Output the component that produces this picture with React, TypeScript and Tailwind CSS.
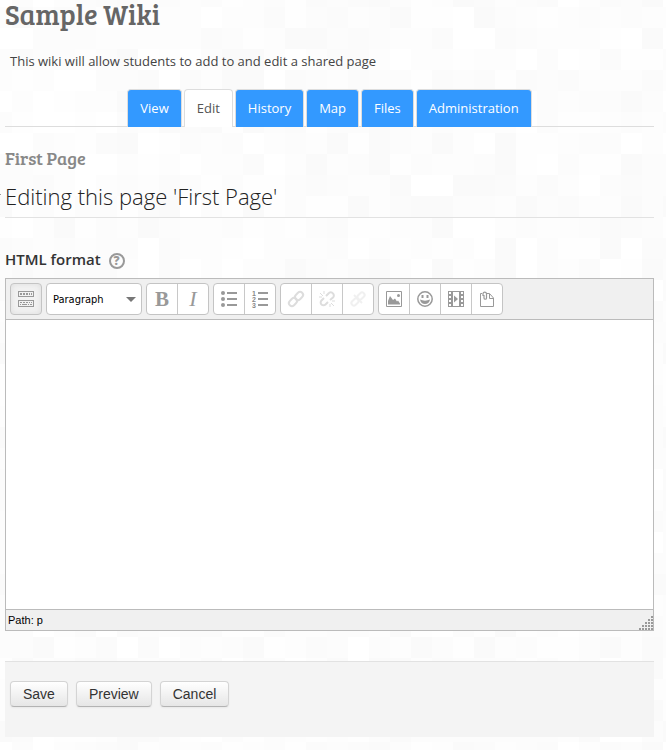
import type { ReactNode } from "react";

const slab = "font-['Bree_Serif','DejaVu_Serif_Condensed','DejaVu_Serif',serif]";

const TILE = 21;
const COLS = 32;
const ROWS = 36;
const shades = ["#ffffff", "#fdfdfd", "#fcfcfc", "#fbfbfb", "#fdfdfd", "#fafafa", "#fefefe", "#fcfcfc"];

function tileShade(col: number, row: number) {
  const n = Math.sin(col * 12.9898 + row * 78.233) * 43758.5453;
  return shades[Math.floor((n - Math.floor(n)) * shades.length)];
}

function Mosaic() {
  const tiles = [];
  for (let r = 0; r < ROWS; r++) {
    for (let c = 0; c < COLS; c++) {
      tiles.push(<rect key={`${r}-${c}`} x={c * TILE} y={r * TILE} width={TILE} height={TILE} fill={tileShade(c, r)} />);
    }
  }
  return (
    <svg aria-hidden="true" className="absolute inset-0 -z-10 h-full w-full">
      <defs>
        <pattern id="mosaic" x={-9} y={-14} width={COLS * TILE} height={ROWS * TILE} patternUnits="userSpaceOnUse">
          {tiles}
        </pattern>
      </defs>
      <rect width="100%" height="100%" fill="url(#mosaic)" />
    </svg>
  );
}

function Icon({ children, crisp }: { children: ReactNode; crisp?: boolean }) {
  return (
    <svg aria-hidden="true" width="16" height="16" viewBox="0 0 16 16" fill="none" stroke="none" className="overflow-visible" shapeRendering={crisp ? "crispEdges" : "auto"}>
      {children}
    </svg>
  );
}

const KeyboardIcon = () => (
  <Icon crisp>
    <path d="M.5 .5h15v5H.5zM.5 9.5h15v6H.5z" stroke="#999" />
    <path d="M2 2h2v2H2zM5 2h2v2H5zM8 2h2v2H8zM11 2h1v2h-1zM13 2h1v2h-1zM2 11h2v1H2zM5 11h2v1H5zM8 11h2v1H8zM11 11h1v1h-1zM13 11h1v1h-1zM2 13h1v1H2zM4 13h5v1H4zM10 13h1v1h-1zM12 13h2v1h-2z" fill="#999" />
  </Icon>
);

const BulletsIcon = () => (
  <Icon>
    <g fill="#999">
      <circle cx="2" cy="2" r="2" />
      <circle cx="2" cy="8" r="2" />
      <circle cx="2" cy="14" r="2" />
      <path d="M6 1h10v2H6zM6 7h10v2H6zM6 13h10v2H6z" />
    </g>
  </Icon>
);

const NumbersIcon = () => (
  <Icon>
    <g fill="#888">
      <path d="M6 1h10v2H6zM6 7h10v2H6zM6 13h10v2H6z" fill="#999" />
      <g className="font-['Liberation_Sans',sans-serif] text-[7px] font-bold">
        <text x="0" y="5">1</text>
        <text x="0" y="11">2</text>
        <text x="0" y="17">3</text>
      </g>
    </g>
  </Icon>
);

const LinkIcon = () => (
  <Icon>
    <g stroke="#ddd" strokeWidth="2">
      <rect x="6.5" y="2" width="9" height="6" rx="3" transform="rotate(-45 11 5)" />
      <rect x=".5" y="8" width="9" height="6" rx="3" transform="rotate(-45 5 11)" />
    </g>
  </Icon>
);

const UnlinkIcon = () => (
  <Icon>
    <g stroke="#ddd" strokeWidth="2">
      <path d="M7 5l2.500-2.500a2.800 2.800 0 0 1 4.500 0a2.800 2.800 0 0 1 0 4L11 9M5 7l-2.500 2.500a2.800 2.800 0 0 0 0 4a2.800 2.800 0 0 0 4 0L9 11" />
      <path d="M1 2l3 3M5 0v3M0 6h3M12 12l3 3M11 13v3M13 10h3" strokeWidth="1" />
    </g>
  </Icon>
);

const NoLinkIcon = () => (
  <Icon>
    <g stroke="#f0f0f0" strokeWidth="2">
      <rect x="7" y="2.5" width="8" height="5" rx="2.5" transform="rotate(-45 11 5)" />
      <rect x="1" y="8.5" width="8" height="5" rx="2.5" transform="rotate(-45 5 11)" />
      <path d="M4 4l8 8" />
    </g>
  </Icon>
);

const PictureIcon = () => (
  <Icon>
    <path d="M.5 .5h15v15H.5z" stroke="#999" />
    <path d="M2 13.500V10l2-5 3 4 2-1.500 2 3 1-1 2 3v1z" fill="#999" />
    <circle cx="12.500" cy="4.500" r="1.500" fill="#999" />
  </Icon>
);

const SmileyIcon = () => (
  <Icon>
    <circle cx="8" cy="8" r="7.200" stroke="#999" strokeWidth="1.500" />
    <path d="M4.500 4h2v3h-2zM9.500 4h2v3h-2zM3 8.500c3 1.500 7 1.500 10 0c-.5 3-2.500 4.500-5 4.500s-4.500-1.500-5-4.500z" fill="#999" />
  </Icon>
);

const FilmIcon = () => (
  <Icon>
    <path fillRule="evenodd" d="M0 0h16v16H0zM5 1v14h6V1zM1 1v2h2V1zM1 5v2h2V5zM1 9v2h2V9zM1 13v2h2v-2zM13 1v2h2V1zM13 5v2h2V5zM13 9v2h2V9zM13 13v2h2v-2z" fill="#999" />
    <path d="M6 4.500l4 3.500-4 3.500z" fill="#999" />
  </Icon>
);

const FilesIcon = () => (
  <Icon>
    <path d="M3 2.500H1.500v13h13V7L10.500 2.500H8M10.500 3v4.500h4" stroke="#999" />
    <path d="M4 5V2.500a1.800 1.800 0 0 1 3.500 0V7a1 1 0 0 1-2.500 0V4" stroke="#999" strokeWidth="1.200" />
  </Icon>
);

const Bold = () => <span className="font-['Liberation_Serif',serif] text-[21px] leading-none font-bold">B</span>;
const Italic = () => <span className="font-['Liberation_Serif',serif] text-[22px] leading-none italic">I</span>;

type Tool = { label: string; icon: ReactNode; disabled?: boolean };

function ToolGroup({ tools, pressed }: { tools: Tool[]; pressed?: boolean }) {
  return (
    <div className={`flex h-8 divide-x divide-[#c8c8c8] rounded border border-[#c4c4c4] ${pressed ? "bg-[#f2f2f2] shadow-[inset_0_0_6px_#ddd]" : "bg-white"}`}>
      {tools.map((t) => (
        <button key={t.label} type="button" aria-label={t.label} disabled={t.disabled} className="flex w-[31px] items-center justify-center text-[#999] last:w-[30px]">
          {t.icon}
        </button>
      ))}
    </div>
  );
}

const tabs = ["View", "Edit", "History", "Map", "Files", "Administration"];

export default function App() {
  return (
    <div className="relative isolate min-h-screen pr-3 pl-[5px] font-['Open_Sans',sans-serif] text-[13px] leading-5 text-[#444]">
      <Mosaic />
      <h1 className={`${slab} h-12 text-[28px] leading-[28px] text-[#666]`}>Sample Wiki</h1>
      <p className="mt-[3px] px-[5px]">This wiki will allow students to add to and edit a shared page</p>

      <nav aria-label="Wiki" className="mt-[18px] flex justify-center gap-0.5 border-b border-[#ddd]">
        {tabs.map((t) => (
          <a
            key={t}
            href="#"
            aria-current={t === "Edit" ? "page" : undefined}
            className={`-mb-px rounded-t border border-b-0 border-[#ddd] px-3 pt-2 pb-[9px] ${t === "Edit" ? "bg-white text-[#555]" : "bg-[#3399ff] text-white"}`}
          >
            {t}
          </a>
        ))}
      </nav>

      <h2 className={`${slab} mt-[19px] text-[18px] leading-6 text-[#888]`}>First Page</h2>

      <form onSubmit={(e) => e.preventDefault()}>
        <h3 className="relative mt-2 border-b border-[#e2e2e2] pb-[3px] text-[22px] leading-[36px] font-light text-[#222]">
          <span className="absolute top-4 -left-[5px] h-px w-px bg-[#999]" />
          Editing this page 'First Page'
        </h3>

        <div className="mt-[31px] flex h-5 items-center gap-2">
          <label htmlFor="content" className="text-[15px] font-semibold text-[#333]">HTML format</label>
          <button type="button" aria-label="Help with HTML format" className="mt-1 flex size-4 items-center justify-center rounded-full border-2 border-[#999] text-[12px] leading-none font-extrabold text-[#999]">
            ?
          </button>
        </div>

        <div className="mt-[9px] border border-[#bbb] bg-white">
          <div className="flex flex-wrap gap-1 border-b border-[#bbb] bg-[#f0f0f0] p-1">
            <ToolGroup pressed tools={[{ label: "Toolbar toggle", icon: <KeyboardIcon /> }]} />
            <div className="relative h-8 w-24">
              <select aria-label="Paragraph format" className="h-full w-full appearance-none rounded border border-[#c4c4c4] bg-white pt-0.5 pl-1.5 font-['Tahoma','DejaVu_Sans_Condensed',sans-serif] text-[11px] text-black">
                <option>Paragraph</option>
              </select>
              <svg aria-hidden="true" className="pointer-events-none absolute top-3.5 right-1.5" width="10" height="5" viewBox="0 0 10 5">
                <path d="M0 0h10L5 5z" fill="#777" />
              </svg>
            </div>
            <ToolGroup tools={[{ label: "Bold", icon: <Bold /> }, { label: "Italic", icon: <Italic /> }]} />
            <ToolGroup tools={[{ label: "Unordered list", icon: <BulletsIcon /> }, { label: "Ordered list", icon: <NumbersIcon /> }]} />
            <ToolGroup
              tools={[
                { label: "Insert link", icon: <LinkIcon />, disabled: true },
                { label: "Unlink", icon: <UnlinkIcon />, disabled: true },
                { label: "Prevent automatic linking", icon: <NoLinkIcon />, disabled: true },
              ]}
            />
            <ToolGroup
              tools={[
                { label: "Insert image", icon: <PictureIcon /> },
                { label: "Insert emoticon", icon: <SmileyIcon /> },
                { label: "Insert media", icon: <FilmIcon /> },
                { label: "Manage files", icon: <FilesIcon /> },
              ]}
            />
          </div>
          <textarea id="content" className="block h-[289px] w-full resize-none p-2 outline-none" />
          <div className="flex h-[21px] items-end justify-between border-t border-[#bbb] bg-[#f0f0f0] pl-0.5 font-['Liberation_Sans',sans-serif] text-[11px] text-black">
            <span>Path: p</span>
            <svg aria-hidden="true" width="14" height="14" viewBox="0 0 14 14" shapeRendering="crispEdges" fill="#999">
              {[0, 1, 2, 3, 4].map((r) =>
                Array.from({ length: r + 1 }, (_, c) => <rect key={`${r}-${c}`} x={12 - c * 3} y={r * 3} width="2" height="2" />),
              )}
            </svg>
          </div>
        </div>

        <div className="mt-[30px] mb-3 flex gap-2 border-t border-[#e2e2e2] bg-[#f4f4f4] px-[5px] pt-[19px] pb-[30px]">
          {["Save", "Preview", "Cancel"].map((b) => (
            <button
              key={b}
              type={b === "Save" ? "submit" : "button"}
              className="h-[26px] rounded border border-[#d4d4d4] border-b-[#b3b3b3] bg-linear-to-b from-white to-[#e6e6e6] px-3 font-['Liberation_Sans',sans-serif] text-[14px] text-[#333] shadow-[0_1px_2px_rgba(0,0,0,0.05)]"
            >
              {b}
            </button>
          ))}
        </div>
      </form>
    </div>
  );
}
